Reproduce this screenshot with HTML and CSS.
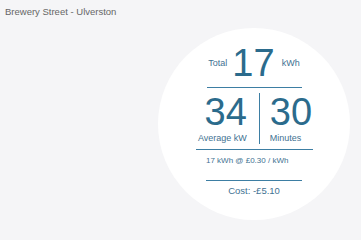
FILE: index.html
```html
<!DOCTYPE html>
<html lang="en">
<head>
    <meta charset="UTF-8">
    <meta name="viewport" content="width=device-width, initial-scale=1.0">
    <title>Brewery Street - Ulverston</title>
    <link rel="stylesheet" href="styles.css">
</head>
<body>
    <div class="header">Brewery Street - Ulverston</div>

    <div class="content">
        <div class="gauge">
            <div class="total-row">
                <span class="label">Total</span>
                <span class="big-number">17</span>
                <span class="label">kWh</span>
            </div>
            <div class="rule rule-top"></div>
            <div class="split-row">
                <div class="split-col split-left">
                    <div class="big-number">34</div>
                    <div class="label">Average kW</div>
                </div>
                <div class="split-divider"></div>
                <div class="split-col split-right">
                    <div class="big-number">30</div>
                    <div class="label">Minutes</div>
                </div>
            </div>
            <div class="rule rule-mid"></div>
            <div class="rate">17 kWh @ £0.30 / kWh</div>
            <div class="rule rule-bottom"></div>
            <div class="cost">Cost: -£5.10</div>
        </div>
    </div>
</body>
</html>
```

FILE: styles.css
```css
* {
    box-sizing: border-box;
}
body {
    margin: 0;
    padding: 0;
    font-family: 'Liberation Sans', Arial, sans-serif;
    background-color: #f5f5f7;
}
.header {
    padding: 6px 5px 0;
    font-size: 9.5px;
    line-height: 12px;
    color: #666;
}
.content {
    display: flex;
    justify-content: flex-end;
    padding-right: 11px;
    margin-top: 10px;
}
.gauge {
    width: 192px;
    height: 192px;
    border-radius: 50%;
    background-color: white;
    display: flex;
    flex-direction: column;
    align-items: center;
    padding-top: 16px;
}
.big-number {
    font-size: 38px;
    line-height: 38px;
    color: #2b6b8c;
}
.label {
    font-size: 9px;
    line-height: 11px;
    color: #3f7292;
}
.total-row {
    display: flex;
    align-items: center;
    gap: 5px;
}
.total-row .big-number {
    margin-right: 2px;
}
.rule {
    height: 1px;
    background-color: #3d7ea3;
}
.rule-top {
    width: 95px;
    margin-top: 5px;
}
.split-row {
    display: flex;
    margin-top: 5px;
    margin-left: 2px;
}
.split-col .label {
    margin-top: 2px;
}
.split-left {
    text-align: right;
    padding-right: 12px;
}
.split-right {
    text-align: left;
    padding-left: 10px;
}
.split-divider {
    width: 1px;
    background-color: #3d7ea3;
}
.rule-mid {
    width: 117px;
    margin-top: 5px;
}
.rate {
    width: 96px;
    margin-top: 6px;
    font-size: 8px;
    line-height: 10px;
    color: #3f7292;
}
.rule-bottom {
    width: 96px;
    margin-top: 14px;
}
.cost {
    margin-top: 4px;
    font-size: 9.5px;
    line-height: 12px;
    color: #3f7292;
}
```
